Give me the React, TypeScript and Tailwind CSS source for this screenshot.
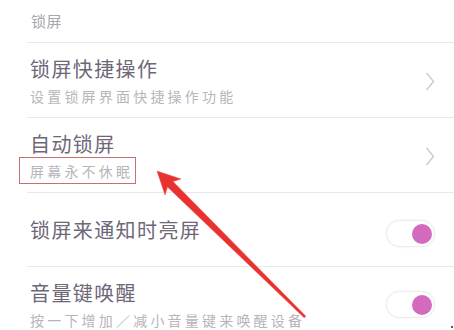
import React from "react";

const font = { fontFamily: '"Noto Sans CJK SC", "Noto Sans", sans-serif' };

function Chevron() {
  return (
    <svg width="10" height="19" viewBox="0 0 10 19" className="mt-[29px] shrink-0">
      <polyline points="1.5,1 8.5,9.5 1.5,18" fill="none" stroke="#cbcbcb" strokeWidth="1.4" />
    </svg>
  );
}

function Toggle({ top }: { top: string }) {
  return (
    <div
      className={`${top} w-[49px] h-[27px] shrink-0 rounded-full border border-[#ececec] bg-white shadow-[0_0_3px_rgba(0,0,0,0.06)] flex items-center justify-end pr-[2px]`}
    >
      <div className="w-[20px] h-[20px] rounded-full bg-[#d36abd]" />
    </div>
  );
}

export default function App() {
  return (
    <div className="relative w-[454px] h-[330px] overflow-hidden bg-white" style={font}>
      <div className="h-[42px] pl-[31px] flex items-center text-[15px] tracking-[0.5px] text-[#aaa6ae]">
        锁屏
      </div>

      <div className="ml-[27px] border-t border-[#e9e9e9] pl-[3px] pr-[19px] h-[75px] flex justify-between">
        <div className="pt-[14px]">
          <div className="text-[20px] leading-[24px] tracking-[1.4px] text-[#6e6777]">锁屏快捷操作</div>
          <div className="mt-[5px] text-[14px] leading-[20px] tracking-[3.2px] text-[#b8b4bc]">设置锁屏界面快捷操作功能</div>
        </div>
        <Chevron />
      </div>

      <div className="ml-[27px] border-t border-[#e9e9e9] pl-[3px] pr-[19px] h-[75px] flex justify-between">
        <div className="pt-[14px]">
          <div className="text-[20px] leading-[24px] tracking-[1.4px] text-[#6e6777]">自动锁屏</div>
          <div className="mt-[5px] text-[14px] leading-[20px] tracking-[3.2px] text-[#b8b4bc]">
            <span className="relative inline-block">
              屏幕永不休眠
              <span className="absolute -left-[11px] -right-[3px] -top-[4px] -bottom-[3px] border border-[#c7706f]" />
            </span>
          </div>
        </div>
        <Chevron />
      </div>

      <div className="ml-[27px] border-t border-[#e9e9e9] pl-[3px] pr-[19px] h-[74px] flex justify-between">
        <div className="pt-[25px] text-[20px] leading-[24px] tracking-[1.4px] text-[#6e6777]">锁屏来通知时亮屏</div>
        <Toggle top="mt-[27px]" />
      </div>

      <div className="ml-[27px] border-t border-[#e9e9e9] pl-[3px] pr-[19px] h-[75px] flex justify-between">
        <div className="pt-[14px]">
          <div className="text-[20px] leading-[24px] tracking-[1.4px] text-[#6e6777]">音量键唤醒</div>
          <div className="mt-[5px] text-[14px] leading-[20px] tracking-[3.2px] text-[#b8b4bc]">按一下增加／减小音量键来唤醒设备</div>
        </div>
        <Toggle top="mt-[24px]" />
      </div>

      <svg className="absolute left-0 top-0 pointer-events-none" width="454" height="330" viewBox="0 0 454 330">
        <polygon
          points="157,171 181,179 173,181.5 305.8,316.2 304.2,317.8 167.5,187 165,195"
          fill="#e8322f"
          stroke="#ee5a57"
          strokeWidth="0.6"
          strokeLinejoin="round"
        />
      </svg>
      <div className="absolute left-[451px] top-[326px] w-[2px] h-[2px] rounded-full bg-[#222]" />
    </div>
  );
}
